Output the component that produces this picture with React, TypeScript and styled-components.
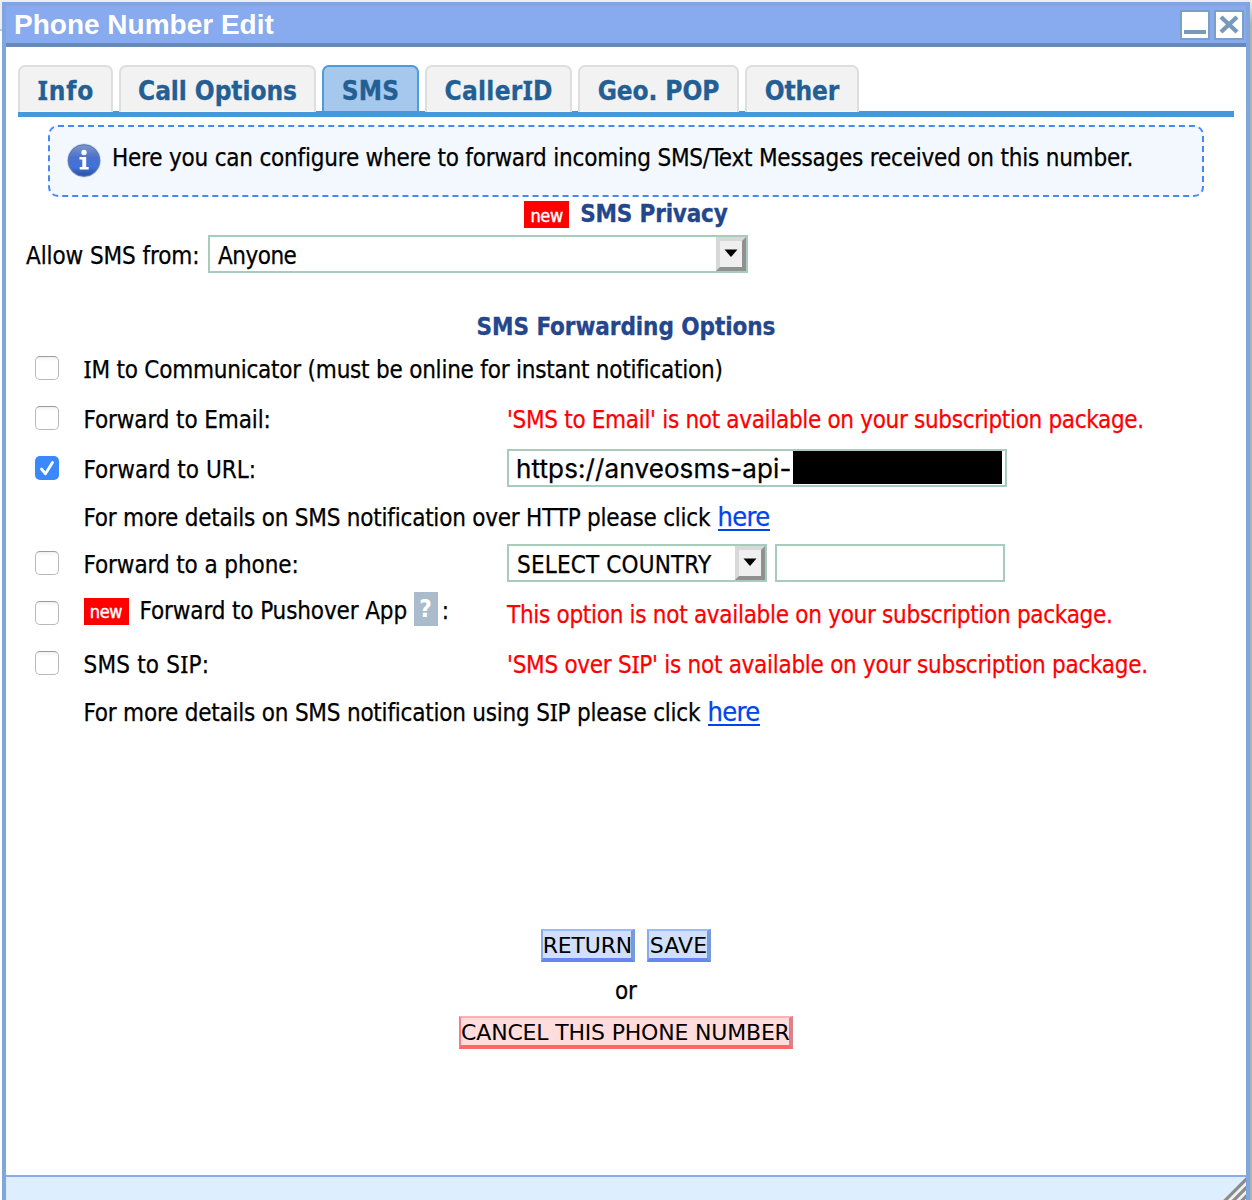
import React from "react";
import styled, { createGlobalStyle, css } from "styled-components";

const tahoma = `"DejaVu Sans Condensed", "DejaVu Sans", sans-serif`;

const GlobalStyle = createGlobalStyle`
  *, *::before, *::after { box-sizing: border-box; }
  body { margin: 0; background: #fff; overflow: hidden; }
`;

const Page = styled.div`
  display: flex;
  width: 1252px;
  height: 1200px;
  padding: 2px 2px 0;
  background:
    linear-gradient(#eee, #eee) 0 0 / 1252px 2px no-repeat,
    linear-gradient(#eee 0 29px, #a8ccf4 29px 31px, #fff 31px) 0 0 / 2px 100% no-repeat,
    linear-gradient(#eee, #b0b0b0 26px) 1250px 0 / 2px 100% no-repeat,
    #fff;
  font-family: ${tahoma};
  color: #000;
`;

const Window = styled.main`
  display: flex;
  flex-direction: column;
  width: 1248px;
  height: 1198px;
  border: 4px solid #80a7dd;
  border-bottom: 0;
  background: #fff;
`;

const TitleBar = styled.header`
  display: flex;
  align-items: center;
  justify-content: space-between;
  flex: none;
  height: 41px;
  padding: 0 2px 0 8px;
  border-bottom: 4px solid #6688bb;
  background: #88aaee;
`;

const Title = styled.h1`
  margin: 0;
  font: bold 28px/37px "Liberation Sans", Arial, sans-serif;
  color: #fff;
`;

const WindowControls = styled.div`
  display: flex;
  gap: 4px;
  padding-top: 1px;
`;

const ControlButton = styled.button`
  display: flex;
  width: 30px;
  height: 30px;
  padding: 0;
  border: 2px solid #7c9fc6;
  background: #fff;
`;

const Content = styled.section`
  display: flex;
  flex-direction: column;
  flex: 1;
  padding-top: 18px;
`;

const Tabs = styled.nav`
  display: flex;
  gap: 6px;
  flex: none;
  height: 52px;
  margin: 0 12px;
  background: linear-gradient(#4499dd, #4499dd) 0 100% / 100% 6px no-repeat;
`;

const Tab = styled.a<{ $width: number; $active?: boolean }>`
  display: flex;
  align-items: center;
  justify-content: center;
  width: ${(p) => p.$width}px;
  height: 47px;
  padding-top: 2px;
  border: 2px solid #dedede;
  border-bottom: 0;
  border-radius: 7px 7px 0 0;
  background: linear-gradient(#f2f2f2 0 43px, #fafafa 45px);
  font-size: 26px;
  font-weight: bold;
  color: #245f94;
  -webkit-text-stroke: 0.3px #245f94;
  ${(p) =>
    p.$active &&
    css`
      height: 46px;
      padding-top: 4px;
      border-color: #4c9bdd;
      background: #a5c8ec;
    `}
`;

const Text = styled.span<{ $spacing?: number }>`
  white-space: nowrap;
  letter-spacing: ${(p) => p.$spacing ?? 0}px;
  margin-right: ${(p) => -(p.$spacing ?? 0)}px;
`;

const BodyText = styled(Text)`
  font-size: 24px;
  line-height: 28px;
  -webkit-text-stroke: 0.25px currentColor;
`;

const SlabI = styled.span`
  font-family: "Noto Sans", sans-serif;
  line-height: 0;
`;

const InfoBox = styled.aside`
  display: flex;
  flex: none;
  height: 72px;
  margin: 8px 42px 0;
  padding: 16px 0 0 16px;
  border: 2px dashed #4488ff;
  border-radius: 10px;
  background: #f3f8ff;
`;

const InfoMessage = styled.p`
  margin: 1px 0 0 10px;
`;

const Heading = styled.h2<{ $height: number; $top: number }>`
  display: flex;
  align-items: center;
  justify-content: center;
  gap: 11px;
  flex: none;
  height: ${(p) => p.$height}px;
  margin: ${(p) => p.$top}px 0 0;
  font-size: 24px;
  line-height: 28px;
  color: #24468c;
`;

const HeadingText = styled(Text)`
  padding-bottom: 2px;
  -webkit-text-stroke: 0.3px #24468c;
`;

const Badge = styled.span`
  display: inline-flex;
  align-items: center;
  justify-content: center;
  width: 45px;
  height: 27px;
  padding-top: 2px;
  background: #f00;
  font-size: 18px;
  font-weight: normal;
  line-height: 24px;
  letter-spacing: -0.3px;
  color: #fff;
  -webkit-text-stroke: 0.4px #fff;
`;

const PrivacyRow = styled.div`
  display: flex;
  align-items: center;
  flex: none;
  height: 38px;
  margin-top: 3px;
  padding-left: 20px;
`;

const FieldLabel = styled.label`
  width: 182px;
  padding-top: 3px;
`;

const Field = styled.div<{ $width: number }>`
  display: flex;
  align-items: center;
  justify-content: space-between;
  width: ${(p) => p.$width}px;
  height: 38px;
  padding-left: 7px;
  border: 2px solid #a8ccbb;
  background: #fff;
`;

const FieldValue = styled.span`
  padding: 3px 0 0 1px;
`;

const DropButton = styled.button`
  display: flex;
  align-items: center;
  justify-content: center;
  flex: none;
  width: 30px;
  height: 34px;
  padding: 0 0 2px;
  border: 4px solid;
  border-color: #d8d8d8 #909090 #909090 #d8d8d8;
  background: #efefef;
`;

const UrlValue = styled(Text)`
  padding-top: 2px;
  font-family: Inter, sans-serif;
  font-size: 26px;
  line-height: 32px;
  -webkit-text-stroke: 0.25px #000;
`;

const Redaction = styled.span`
  width: 209px;
  height: 33px;
  margin: 0 3px 1px auto;
  background: #000;
`;

const OptionGrid = styled.div`
  display: flex;
  flex-direction: column;
  flex: none;
  padding-left: 29px;
`;

const OptionRow = styled.div<{ $note?: boolean }>`
  display: grid;
  grid-template-columns: 48.5px 423.5px 1fr;
  align-items: center;
  height: ${(p) => (p.$note ? 45 : 50)}px;
`;

const OptionName = styled.div<{ $lift?: boolean }>`
  display: flex;
  align-items: center;
  padding: ${(p) => (p.$lift ? "0 0 4px" : "3px 0 0")};
  white-space: nowrap;
`;

const OptionValue = styled.div`
  display: flex;
  align-items: center;
  gap: 8px;
`;

const Unavailable = styled.div`
  padding-top: 3px;
  color: #f00;
`;

const Note = styled.p`
  display: flex;
  align-items: baseline;
  grid-column: 2 / -1;
  margin: 0;
  padding-top: 3px;
`;

const Link = styled.a`
  height: 28px;
  margin-left: 7px;
  border-bottom: 2px solid #0044ee;
  font-size: 27px;
  line-height: 27px;
  letter-spacing: -0.65px;
  color: #0044ee;
  -webkit-text-stroke: 0.25px #0044ee;
`;

const Check = styled.span<{ $on?: boolean }>`
  display: flex;
  width: 24px;
  height: 24px;
  border: 1.5px solid #b9b9b9;
  border-top-color: #9c9c9c;
  border-radius: 5px;
  background: linear-gradient(#f0f0f0, #fff 4px);
  ${(p) =>
    p.$on &&
    css`
      border: 0;
      background: #3b87fd;
    `}
`;

const PushoverName = styled.span`
  margin-left: 11px;
`;

const Help = styled.span`
  display: flex;
  align-items: center;
  justify-content: center;
  width: 24px;
  height: 34px;
  margin: 0 4px 4px 6.5px;
  background: #aabbcc;
  font-size: 24px;
  font-weight: bold;
  color: #fff;
`;

const Actions = styled.footer`
  display: flex;
  flex-direction: column;
  align-items: center;
  margin-top: 196px;
`;

const ActionRow = styled.div`
  display: flex;
  gap: 12px;
`;

const ActionButton = styled.button<{ $width: number; $danger?: boolean }>`
  display: flex;
  align-items: center;
  justify-content: center;
  width: ${(p) => p.$width}px;
  height: 33px;
  padding: 3px 0 0 1px;
  border-style: solid;
  border-width: 2px 4px 4px 2px;
  border-color: ${(p) => (p.$danger ? "#ffb0b5 #dd8088 #ff6666 #ee8088" : "#99bbff #7799dd #6688ee #88aaee")};
  background: ${(p) => (p.$danger ? "#ffdddd" : "#d0e0fa")};
  font: 22px/26px "DejaVu Sans", Verdana, sans-serif;
  color: #000;
`;

const Or = styled.div`
  display: flex;
  align-items: center;
  height: 54px;
  padding-top: 3px;
`;

const StatusBar = styled.div`
  display: flex;
  justify-content: flex-end;
  flex: none;
  height: 25px;
  border-top: 2px solid #88aaee;
  background: #ddeeff;
`;

/* Capital I is set in a face that gives it slab serifs. */
const slab = (text: string) =>
  text.split(/(I)/).map((part, i) => (part === "I" ? <SlabI key={i}>I</SlabI> : part));

const Arrow = () => (
  <svg width="14" height="9" viewBox="0 0 14 9">
    <path d="M.5 .5h13L7 8z" fill="#000" />
  </svg>
);

const InfoIcon = () => (
  <svg width="36" height="36" viewBox="0 0 36 36">
    <defs>
      <linearGradient id="ball" x1="0" y1="0" x2="0" y2="1">
        <stop offset="0" stopColor="#8098c4" />
        <stop offset=".4" stopColor="#4a72cc" />
        <stop offset=".7" stopColor="#4272dc" />
        <stop offset="1" stopColor="#27509f" />
      </linearGradient>
    </defs>
    <circle cx="18" cy="17.5" r="17" fill="#c9d5e8" />
    <circle cx="18" cy="17.5" r="15.8" fill="url(#ball)" stroke="#5574b0" />
    <circle cx="18" cy="9.5" r="2.7" fill="#fff" />
    <path d="M13.5 14h6.7v10h2.5v2.6h-9V24h2.6v-7.4h-2.8z" fill="#fff" />
  </svg>
);

const tabs = [
  { name: "Info", width: 95, spacing: 0.8 },
  { name: "Call Options", width: 197, spacing: -0.06 },
  { name: "SMS", width: 97, spacing: 0.2, active: true },
  { name: "CallerID", width: 147, spacing: 0.3 },
  { name: "Geo. POP", width: 161, spacing: -0.1 },
  { name: "Other", width: 114, spacing: -0.15 },
];

export default function App() {
  return (
    <>
      <GlobalStyle />
      <Page>
        <Window>
          <TitleBar>
            <Title>Phone Number Edit</Title>
            <WindowControls>
              <ControlButton aria-label="Minimize">
                <svg width="26" height="26" viewBox="0 0 26 26">
                  <path d="M2 20h22" stroke="#7799bb" strokeWidth="4" />
                </svg>
              </ControlButton>
              <ControlButton aria-label="Close">
                <svg width="26" height="26" viewBox="0 0 26 26">
                  <path d="M5 5l16 15M21 5L5 20" stroke="#7799bb" strokeWidth="4.4" />
                </svg>
              </ControlButton>
            </WindowControls>
          </TitleBar>

          <Content>
            <Tabs>
              {tabs.map((t) => (
                <Tab key={t.name} $width={t.width} $active={t.active}>
                  <Text $spacing={t.spacing}>{slab(t.name)}</Text>
                </Tab>
              ))}
            </Tabs>

            <InfoBox>
              <InfoIcon />
              <InfoMessage>
                <BodyText $spacing={-0.21}>
                  Here you can configure where to forward incoming SMS/Text Messages received on this number.
                </BodyText>
              </InfoMessage>
            </InfoBox>

            <Heading $height={35} $top={0}>
              <Badge>new</Badge>
              <HeadingText $spacing={-0.19}>SMS Privacy</HeadingText>
            </Heading>
            <PrivacyRow>
              <FieldLabel>
                <BodyText $spacing={-0.1}>Allow SMS from:</BodyText>
              </FieldLabel>
              <Field $width={540}>
                <FieldValue>
                  <BodyText $spacing={-0.5}>Anyone</BodyText>
                </FieldValue>
                <DropButton aria-label="Open list">
                  <Arrow />
                </DropButton>
              </Field>
            </PrivacyRow>

            <Heading $height={30} $top={40}>
              <HeadingText $spacing={-0.07}>SMS Forwarding Options</HeadingText>
            </Heading>

            <OptionGrid>
              <OptionRow>
                <Check />
                <OptionName>
                  <BodyText $spacing={-0.225}>
                    {slab("IM to Communicator (must be online for instant notification)")}
                  </BodyText>
                </OptionName>
              </OptionRow>
              <OptionRow>
                <Check />
                <OptionName>
                  <BodyText $spacing={-0.12}>Forward to Email:</BodyText>
                </OptionName>
                <Unavailable>
                  <BodyText $spacing={-0.32}>
                    'SMS to Email' is not available on your subscription package.
                  </BodyText>
                </Unavailable>
              </OptionRow>
              <OptionRow>
                <Check $on>
                  <svg width="24" height="24" viewBox="0 0 24 24">
                    <path d="M6.5 13l4 4.8L17.5 6.5" fill="none" stroke="#fff" strokeWidth="2.8" strokeLinecap="round" strokeLinejoin="round" />
                  </svg>
                </Check>
                <OptionName>
                  <BodyText $spacing={0.03}>Forward to URL:</BodyText>
                </OptionName>
                <OptionValue>
                  <Field $width={500}>
                    <UrlValue $spacing={0.12}>https://anveosms-api-</UrlValue>
                    <Redaction />
                  </Field>
                </OptionValue>
              </OptionRow>
              <OptionRow $note>
                <Note>
                  <BodyText $spacing={-0.222}>
                    For more details on SMS notification over HTTP please click
                  </BodyText>
                  <Link>here</Link>
                </Note>
              </OptionRow>
              <OptionRow>
                <Check />
                <OptionName>
                  <BodyText $spacing={-0.1}>Forward to a phone:</BodyText>
                </OptionName>
                <OptionValue>
                  <Field $width={260}>
                    <FieldValue>
                      <BodyText $spacing={0.168}>SELECT COUNTRY</BodyText>
                    </FieldValue>
                    <DropButton aria-label="Open list">
                      <Arrow />
                    </DropButton>
                  </Field>
                  <Field $width={230} />
                </OptionValue>
              </OptionRow>
              <OptionRow>
                <Check />
                <OptionName $lift>
                  <Badge>new</Badge>
                  <PushoverName>
                    <BodyText $spacing={-0.13}>Forward to Pushover App</BodyText>
                  </PushoverName>
                  <Help>?</Help>
                  <BodyText>:</BodyText>
                </OptionName>
                <Unavailable>
                  <BodyText $spacing={-0.291}>
                    This option is not available on your subscription package.
                  </BodyText>
                </Unavailable>
              </OptionRow>
              <OptionRow>
                <Check />
                <OptionName>
                  <BodyText $spacing={0.2}>{slab("SMS to SIP:")}</BodyText>
                </OptionName>
                <Unavailable>
                  <BodyText $spacing={-0.28}>
                    {slab("'SMS over SIP' is not available on your subscription package.")}
                  </BodyText>
                </Unavailable>
              </OptionRow>
              <OptionRow $note>
                <Note>
                  <BodyText $spacing={-0.22}>
                    {slab("For more details on SMS notification using SIP please click")}
                  </BodyText>
                  <Link>here</Link>
                </Note>
              </OptionRow>
            </OptionGrid>

            <Actions>
              <ActionRow>
                <ActionButton $width={94}>
                  <Text $spacing={-0.2}>RETURN</Text>
                </ActionButton>
                <ActionButton $width={64}>
                  <Text $spacing={0.2}>SAVE</Text>
                </ActionButton>
              </ActionRow>
              <Or>
                <BodyText $spacing={-0.2}>or</BodyText>
              </Or>
              <ActionButton $width={334} $danger>
                <Text $spacing={-0.188}>CANCEL THIS PHONE NUMBER</Text>
              </ActionButton>
            </Actions>
          </Content>

          <StatusBar>
            <svg width="24" height="23" viewBox="0 0 24 23">
              <path d="M24 1v22H0z" fill="#f0f2f4" />
              <path d="M25 1.5L1 25.5M25 10L9 26M25 18.5L17 26.5" stroke="#8c8c8c" strokeWidth="3.2" />
            </svg>
          </StatusBar>
        </Window>
      </Page>
    </>
  );
}
